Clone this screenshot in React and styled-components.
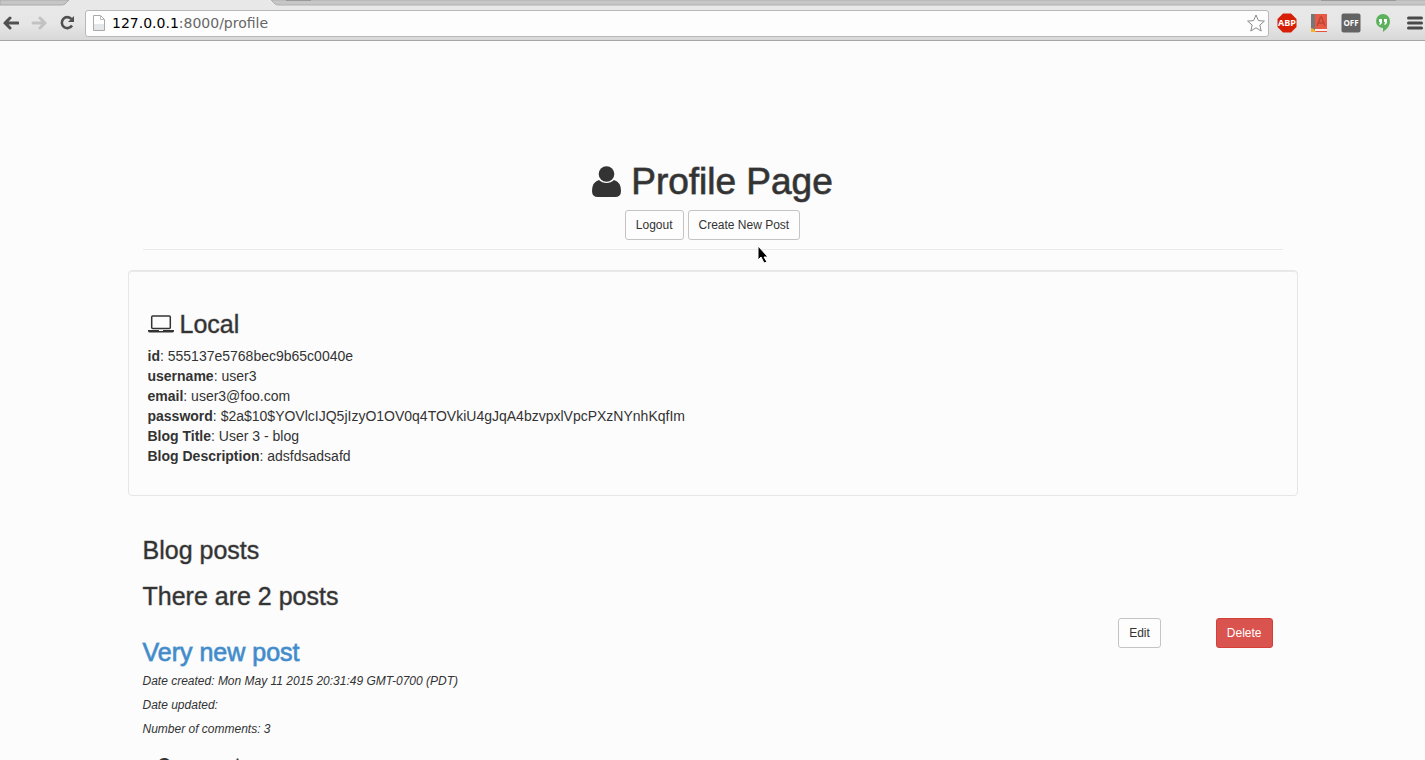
import React from 'react';
import styled, { createGlobalStyle } from 'styled-components';

const GlobalStyle = createGlobalStyle`
  * { box-sizing: border-box; }
  body {
    margin: 0;
    background: #fcfcfc;
    color: #333;
    font: 14px/20px "Liberation Sans", Arial, sans-serif;
  }
`;

const Window = styled.div`
  display: flex;
  flex-direction: column;
  height: 100vh;
  overflow: hidden;
`;

const Browser = styled.header`
  flex: none;
  border-bottom: 1px solid #a6a6a6;
  background: linear-gradient(#e9e9e9, #e6e6e6 60%, #d8d8d8);
`;

const TabStrip = styled.div`
  height: 6px;
`;

const TabDrawing = styled.svg`
  display: block;
  width: 100%;
  height: 6px;
`;

const Toolbar = styled.div`
  display: flex;
  align-items: center;
  height: 34px;
  padding-left: 2px;
`;

const IconButton = styled.button`
  display: flex;
  flex: none;
  align-items: center;
  justify-content: center;
  width: ${(p) => p.$width || 20}px;
  height: 24px;
  margin: 0 ${(p) => p.$gap || 0}px 0 0;
  padding: 0;
  border: 0;
  background: none;
`;

const AddressBar = styled.div`
  display: flex;
  flex: 1;
  align-items: center;
  height: 27px;
  margin-right: 8px;
  padding: 0 2px 0 7px;
  border: 1px solid #b8b8b8;
  border-radius: 3px;
  background: #fdfdfd;
`;

const Address = styled.div`
  display: grid;
  flex: 1;
  margin-left: 7px;
  font: 14px/22px "DejaVu Sans", sans-serif;
  color: #666;
  > * { grid-area: 1 / 1; }
  b { font-weight: 400; color: #000; }
`;

const AddressInput = styled.input`
  width: 100%;
  padding: 0;
  border: 0;
  outline: 0;
  background: none;
  color: transparent;
  font: inherit;
`;

const Page = styled.main`
  width: 100%;
  max-width: 1170px;
  margin: 0 auto;
  padding: 121px 15px 0;
`;

const PageHeader = styled.div`
  padding-bottom: 9px;
  margin-bottom: 20px;
  border-bottom: 1px solid #eaeaea;
  text-align: center;
`;

const Title = styled.h1`
  display: flex;
  align-items: center;
  justify-content: center;
  gap: 10px;
  margin: 0 0 8px;
  font-size: 37px;
  font-weight: 400;
  line-height: 40px;
  -webkit-text-stroke: 1px rgba(51, 51, 51, 0.7);
`;

const Actions = styled.div`
  display: flex;
  justify-content: center;
  gap: 4px;
`;

const Button = styled.button`
  height: 30px;
  padding: 0 10px;
  border: 1px solid ${(p) => (p.$danger ? '#d43f3a' : '#c4c4c4')};
  border-radius: 3px;
  background: ${(p) => (p.$danger ? '#d9534f' : '#fdfdfd')};
  color: ${(p) => (p.$danger ? '#fff' : '#333')};
  font: 12px/18px "Liberation Sans", Arial, sans-serif;
`;

const Well = styled.section`
  min-height: 226px;
  margin: 0 -15px 40px;
  padding: 39px 19px 29px;
  border: 1px solid #e6e6e6;
  border-radius: 4px;
  box-shadow: inset 0 1px 0 #e9e9e9;
`;

const Heading = styled.h3`
  display: flex;
  align-items: center;
  gap: 6px;
  margin: 0 0 ${(p) => p.$after || 0}px;
  font-size: 25px;
  font-weight: 400;
  line-height: 28px;
  -webkit-text-stroke: 1px rgba(51, 51, 51, 0.4);
  a {
    color: #428bca;
    text-decoration: none;
    -webkit-text-stroke: 1px rgba(66, 139, 202, 0.7);
  }
`;

const Details = styled.p`
  margin: 0;
`;

const Post = styled.article`
  display: flex;
  justify-content: space-between;
`;

const PostActions = styled.div`
  display: flex;
  align-items: flex-start;
  gap: 55px;
  padding: 8px 10px 0 0;
`;

const PostText = styled.div`
  padding-top: 28px;
`;

const Meta = styled.p`
  margin: 0 0 4px;
  font-size: 12px;
  font-style: italic;
`;

const Comments = styled.h4`
  margin: 16px 0 0 15px;
  font-size: 18px;
  line-height: 20px;
`;

const Cursor = styled.svg`
  position: absolute;
  left: 757px;
  top: 245px;
`;

const details = [
  ['id', '555137e5768bec9b65c0040e'],
  ['username', 'user3'],
  ['email', 'user3@foo.com'],
  ['password', '$2a$10$YOVlcIJQ5jIzyO1OV0q4TOVkiU4gJqA4bzvpxlVpcPXzNYnhKqfIm'],
  ['Blog Title', 'User 3 - blog'],
  ['Blog Description', 'adsfdsadsafd'],
];

function Arrow({ forward }) {
  return (
    <svg width="16" height="16" viewBox="0 0 16 16" fill="none" stroke={forward ? '#c2c2c2' : '#505050'} strokeWidth="3" strokeLinecap="round">
      <path d={forward ? 'M2 8H14M9 3l5 5-5 5' : 'M15 8H2M7 3L2 8l5 5'} />
    </svg>
  );
}

function BrowserBar() {
  return (
    <Browser>
      <TabStrip>
        <TabDrawing>
          <path d="M0 0H69L65 4Q64 5 61 5H0Z" fill="#c6c6c6" stroke="#aaa" />
          <svg x="271" overflow="visible">
            <path d="M0 0L4 4Q5 5 8 5H3000V0Z" fill="#c6c6c6" stroke="#b0b0b0" />
            <path d="M15 0h25" stroke="#999" strokeWidth="2" />
          </svg>
          <path d="M1321 0h75" stroke="#999" strokeWidth="2" />
        </TabDrawing>
      </TabStrip>
      <Toolbar>
        <IconButton aria-label="Back" $width={17} $gap={11}><Arrow /></IconButton>
        <IconButton aria-label="Forward" $width={17} $gap={12}><Arrow forward /></IconButton>
        <IconButton aria-label="Reload" $width={16} $gap={10}>
          <svg width="16" height="16" viewBox="0 0 16 16">
            <path d="M12.500 4A5.500 5.500 0 1 0 13 10.500" fill="none" stroke="#505050" strokeWidth="2.600" />
            <path d="M15 1v6H9Z" fill="#505050" />
          </svg>
        </IconButton>
        <AddressBar>
          <svg width="12" height="16" viewBox="0 0 12 16">
            <path d="M.5.500h7l4 4v11H.5Z" fill="#fff" stroke="#aaa" />
            <path d="M1 9h10v6H1Z" fill="#e4e7ea" />
            <path d="M7.500.500v4h4" fill="none" stroke="#bbb" />
          </svg>
          <Address>
            <span><b>127.0.0.1</b>:8000/profile</span>
            <AddressInput aria-label="Address" />
          </Address>
          <IconButton aria-label="Bookmark">
            <svg width="18" height="18" viewBox="0 0 18 18">
              <path d="M9 1l2.400 5.600 6 .500-4.600 4 1.400 5.900L9 13.800 3.800 17l1.400-5.900-4.600-4 6-.500Z" fill="#fff" stroke="#8a8a8a" strokeLinejoin="round" />
            </svg>
          </IconButton>
        </AddressBar>
        <IconButton aria-label="Ad blocker" $gap={12}>
          <svg width="20" height="20" viewBox="0 0 20 20">
            <path d="M6 .500h8L19.500 6v8L14 19.500H6L.5 14V6Z" fill="#d71f05" />
            <text x="10" y="13" textAnchor="middle" fontFamily="Open Sans" fontWeight="700" fontSize="9" fill="#fff">ABP</text>
          </svg>
        </IconButton>
        <IconButton aria-label="Dictionary" $gap={12}>
          <svg width="18" height="20" viewBox="0 0 18 20">
            <path d="M1 1h4v18H1Z" fill="#777" />
            <path d="M5 1h12v15H5Z" fill="#e95a45" />
            <path d="M5 16h12v2H5Z" fill="#f7eeee" />
            <path d="M5 18h12v1H5Z" fill="#e5533e" />
            <path d="M7 13l3.500-9h1l3.500 9M8 10h6" fill="none" stroke="#bd4536" strokeWidth="1.500" />
            <path d="M1 15l3 1 2 3H1Z" fill="#efb52e" />
          </svg>
        </IconButton>
        <IconButton aria-label="Toggle extension" $gap={12}>
          <svg width="20" height="20" viewBox="0 0 20 20">
            <rect x=".5" y=".5" width="19" height="19" rx="2" fill="#636363" />
            <text x="10" y="13" textAnchor="middle" fontFamily="Open Sans" fontWeight="700" fontSize="8" fill="#fff">OFF</text>
          </svg>
        </IconButton>
        <IconButton aria-label="Hangouts" $gap={12}>
          <svg width="16" height="20" viewBox="0 0 16 20">
            <path d="M8 1a7 7 0 0 1 7 7c0 5-3 8-7 11v-4A7 7 0 1 1 8 1Z" fill="#5cb25a" />
            <path d="M4 6h3v3q0 2-2 3l-1-1q1 0 1-2H4ZM9 6h3v3q0 2-2 3l-1-1q1 0 1-2H9Z" fill="#fff" />
          </svg>
        </IconButton>
        <IconButton aria-label="Menu">
          <svg width="16" height="14" viewBox="0 0 16 14">
            <path d="M1.500 2h13M1.500 7h13M1.500 12h13" stroke="#4a4a4a" strokeWidth="3" strokeLinecap="round" />
          </svg>
        </IconButton>
      </Toolbar>
    </Browser>
  );
}

export default function App() {
  return (
    <>
      <GlobalStyle />
      <Window>
        <BrowserBar />
        <Page>
          <PageHeader>
            <Title>
              <svg width="29" height="32" viewBox="0 0 29 32" fill="#333">
                <path d="M7 14Q0 16 0 25q0 6 6 6h17q6 0 6-6 0-9-7-11-3 3-7.500 3T7 14Z" />
                <circle cx="14.500" cy="8" r="7.800" />
              </svg>
              Profile Page
            </Title>
            <Actions>
              <Button>Logout</Button>
              <Button>Create New Post</Button>
            </Actions>
          </PageHeader>
          <Well>
            <Heading $after={8}>
              <svg width="26" height="18" viewBox="0 0 26 18">
                <rect x="3.700" y="1" width="18.600" height="12.500" rx="1" fill="none" stroke="#333" strokeWidth="1.500" />
                <path d="M0 15h11v1h4v-1h11v1q0 1.500-2 1.500H2q-2 0-2-1.500Z" fill="#333" />
              </svg>
              Local
            </Heading>
            <Details>
              {details.map(([label, value]) => (
                <React.Fragment key={label}>
                  <strong>{label}</strong>: {value}<br />
                </React.Fragment>
              ))}
            </Details>
          </Well>
          <Heading $after={18}>Blog posts</Heading>
          <Heading>There are 2 posts</Heading>
          <Post>
            <PostText>
              <Heading $after={5}><a href="#post">Very new post</a></Heading>
              <Meta>Date created: Mon May 11 2015 20:31:49 GMT-0700 (PDT)</Meta>
              <Meta>Date updated:</Meta>
              <Meta>Number of comments: 3</Meta>
              <Comments>Comments</Comments>
            </PostText>
            <PostActions>
              <Button>Edit</Button>
              <Button $danger>Delete</Button>
            </PostActions>
          </Post>
        </Page>
      </Window>
      <Cursor width="12" height="18" viewBox="0 0 12 18">
        <path d="M1 1v14l3-3 3 6 3-1-3-5h4Z" fill="#000" stroke="#fff" />
      </Cursor>
    </>
  );
}
